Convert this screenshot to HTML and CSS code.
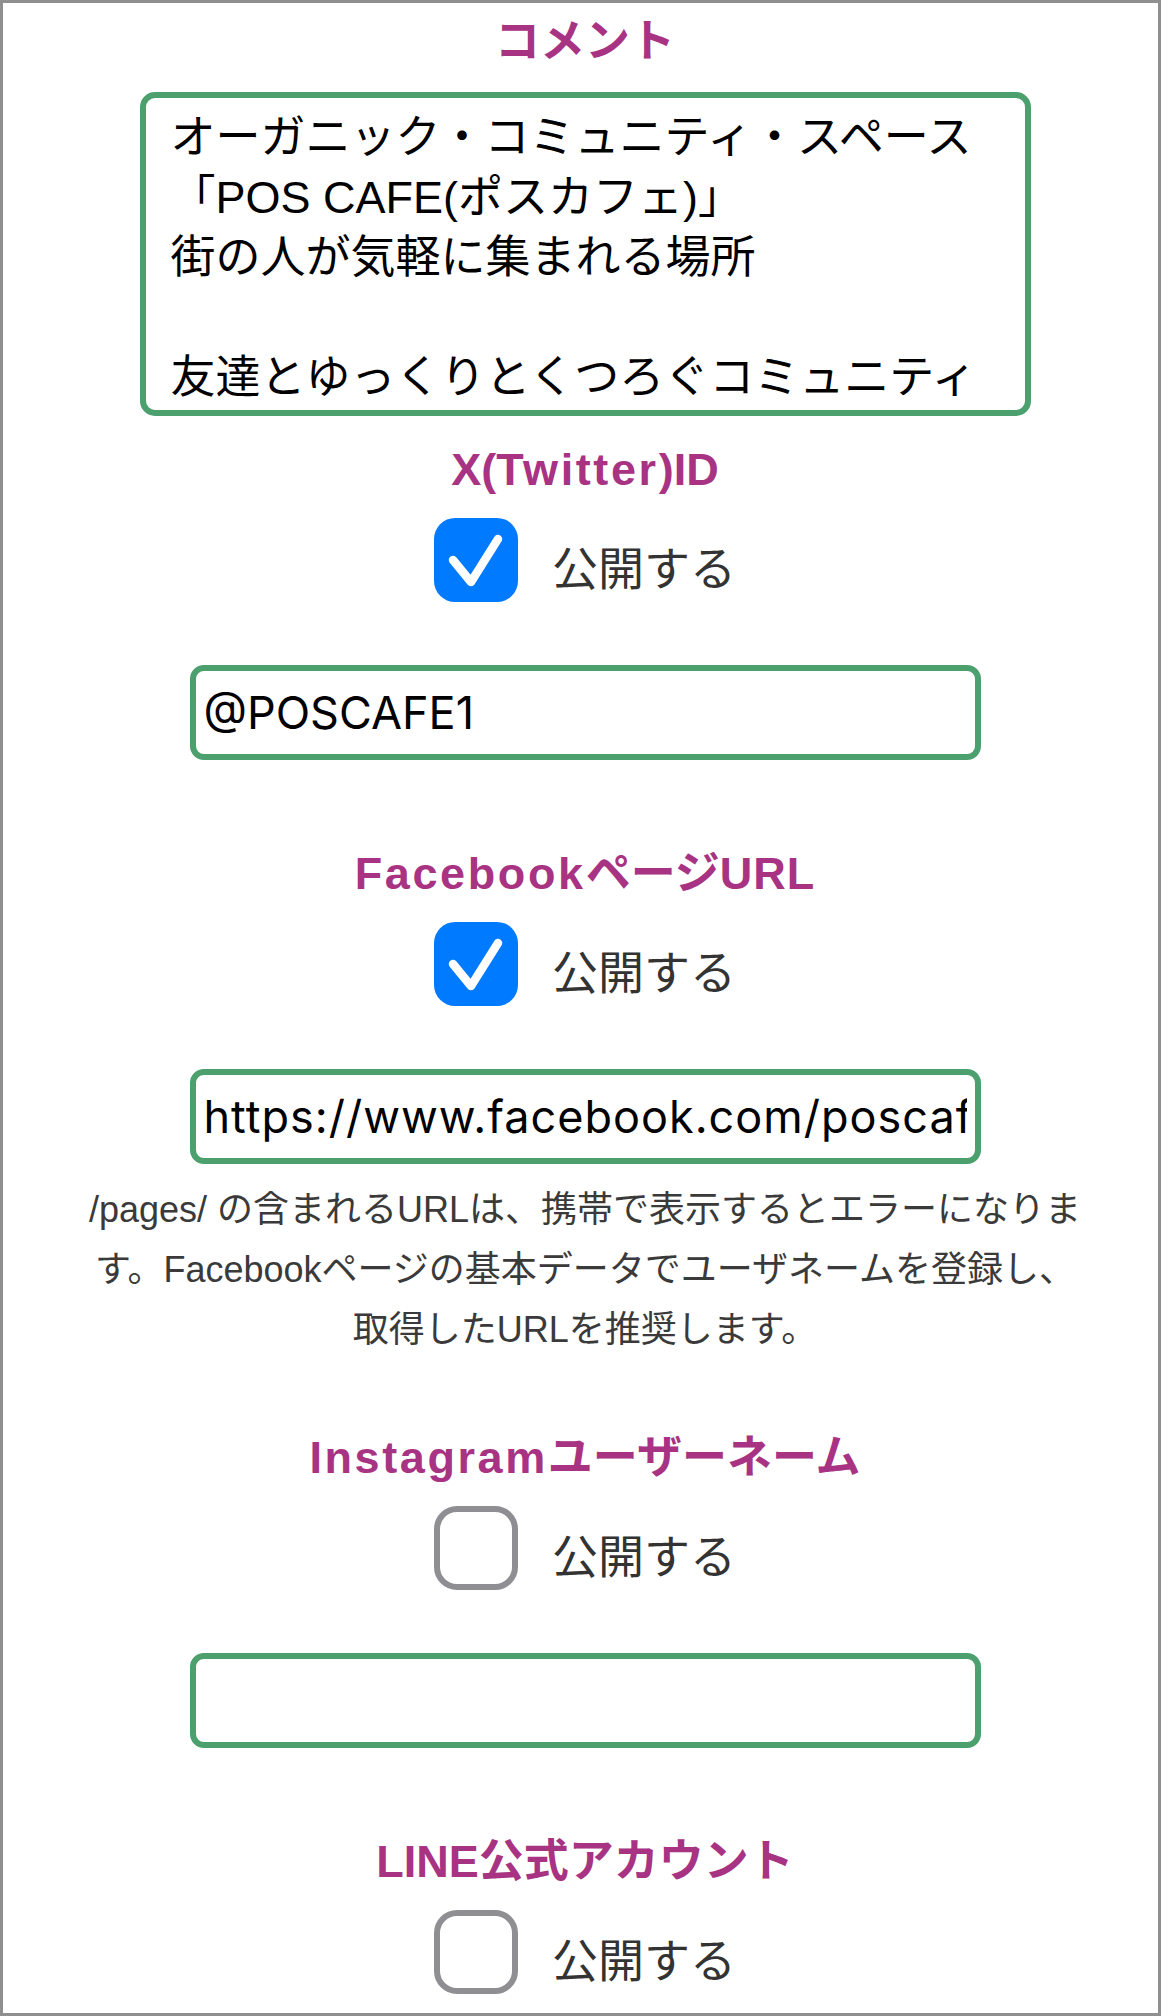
FILE: index.html
```html
<!DOCTYPE html>
<html lang="ja">
<head>
<meta charset="utf-8">
<title>SNS設定</title>
<link rel="stylesheet" href="styles.css">
</head>
<body>
<div class="frame">
  <section class="field field-comment">
    <h2 class="field-title">コメント</h2>
    <textarea class="memo" readonly>オーガニック・コミュニティ・スペース
「POS CAFE(ポスカフェ)」
街の人が気軽に集まれる場所

友達とゆっくりとくつろぐコミュニティ</textarea>
  </section>

  <section class="field">
    <h2 class="field-title">X(<span class="latin">Twitter</span>)ID</h2>
    <label class="toggle">
      <span class="box box-on">
        <svg width="84" height="84" viewBox="0 0 84 84"><polyline points="19,42 37,64 64,21" fill="none" stroke="#fff" stroke-width="8.5" stroke-linecap="round" stroke-linejoin="round"/></svg>
      </span>
      <span class="toggle-text">公開する</span>
    </label>
    <input class="text-input" type="text" value="@POSCAFE1">
  </section>

  <section class="field">
    <h2 class="field-title"><span class="latin">Facebook</span>ページ<span class="latin-caps">URL</span></h2>
    <label class="toggle">
      <span class="box box-on">
        <svg width="84" height="84" viewBox="0 0 84 84"><polyline points="19,42 37,64 64,21" fill="none" stroke="#fff" stroke-width="8.5" stroke-linecap="round" stroke-linejoin="round"/></svg>
      </span>
      <span class="toggle-text">公開する</span>
    </label>
    <input class="text-input text-input-url" type="text" value="https://www.facebook.com/poscafe1">
    <p class="help">/pages/ の含まれるURLは、携帯で表示するとエラーになりま<br>す。Facebookページの基本データでユーザネームを登録し、<br>取得したURLを推奨します。</p>
  </section>

  <section class="field field-after-help">
    <h2 class="field-title"><span class="latin">Instagram</span>ユーザーネーム</h2>
    <label class="toggle">
      <span class="box box-off"></span>
      <span class="toggle-text">公開する</span>
    </label>
    <input class="text-input" type="text" value="">
  </section>

  <section class="field">
    <h2 class="field-title">LINE公式アカウント</h2>
    <label class="toggle">
      <span class="box box-off"></span>
      <span class="toggle-text">公開する</span>
    </label>
  </section>
</div>
</body>
</html>
```

FILE: styles.css
```css
html, body {
  margin: 0;
  padding: 0;
  background: #ffffff;
}

body {
  font-family: "Liberation Sans", "Noto Sans CJK JP", sans-serif;
  color: #000;
}

.frame {
  width: 1161px;
  height: 2016px;
  box-sizing: border-box;
  border: 3px solid #8f8f8f;
  padding: 7px 0 0 9px;
  overflow: hidden;
  display: flex;
  flex-direction: column;
  align-items: center;
}

.field {
  display: flex;
  flex-direction: column;
  align-items: center;
  margin-top: 82px;
}

.field-comment {
  margin-top: 0;
}

.field-comment + .field {
  margin-top: 22px;
}

.field-after-help {
  margin-top: 66px;
}

.field-title {
  margin: 0;
  padding-top: 4px;
  font-size: 45px;
  line-height: 56px;
  font-weight: 700;
  color: #a83383;
  text-align: center;
}

.latin {
  letter-spacing: 2.6px;
}

.latin-caps {
  letter-spacing: 1px;
}

.memo {
  display: block;
  margin-top: 22px;
  width: 891px;
  height: 324px;
  box-sizing: border-box;
  border: 6px solid #4ba06e;
  border-radius: 15px;
  padding: 10px 18px 0 25px;
  font-family: "Liberation Sans", "Noto Sans CJK JP", sans-serif;
  font-size: 45px;
  line-height: 60px;
  color: #000;
  background: #fff;
  resize: none;
  overflow: hidden;
  outline: none;
}

.toggle {
  display: flex;
  align-items: center;
  gap: 34px;
  margin-top: 20px;
  height: 84px;
}

.box {
  width: 84px;
  height: 84px;
  box-sizing: border-box;
  border-radius: 21px;
  display: block;
}

.box svg {
  display: block;
}

.box-on {
  background: #007aff;
}

.box-off {
  border: 6px solid #8e8e93;
  border-radius: 23px;
}

.toggle-text {
  font-family: "Noto Sans CJK JP", sans-serif;
  font-size: 46px;
  line-height: 60px;
  color: #333333;
  padding-top: 10px;
}

.text-input {
  display: block;
  margin-top: 63px;
  width: 791px;
  height: 95px;
  box-sizing: border-box;
  border: 6px solid #4ba06e;
  border-radius: 14px;
  padding: 0 8px;
  font-family: Inter, "Liberation Sans", sans-serif;
  font-size: 45px;
  color: #000;
  background: #fff;
  outline: none;
}

.text-input-url {
  letter-spacing: 1px;
}

.help {
  margin: 16px 0 0;
  font-size: 36px;
  line-height: 60px;
  color: #3a3a3a;
  text-align: center;
  white-space: nowrap;
}
```
